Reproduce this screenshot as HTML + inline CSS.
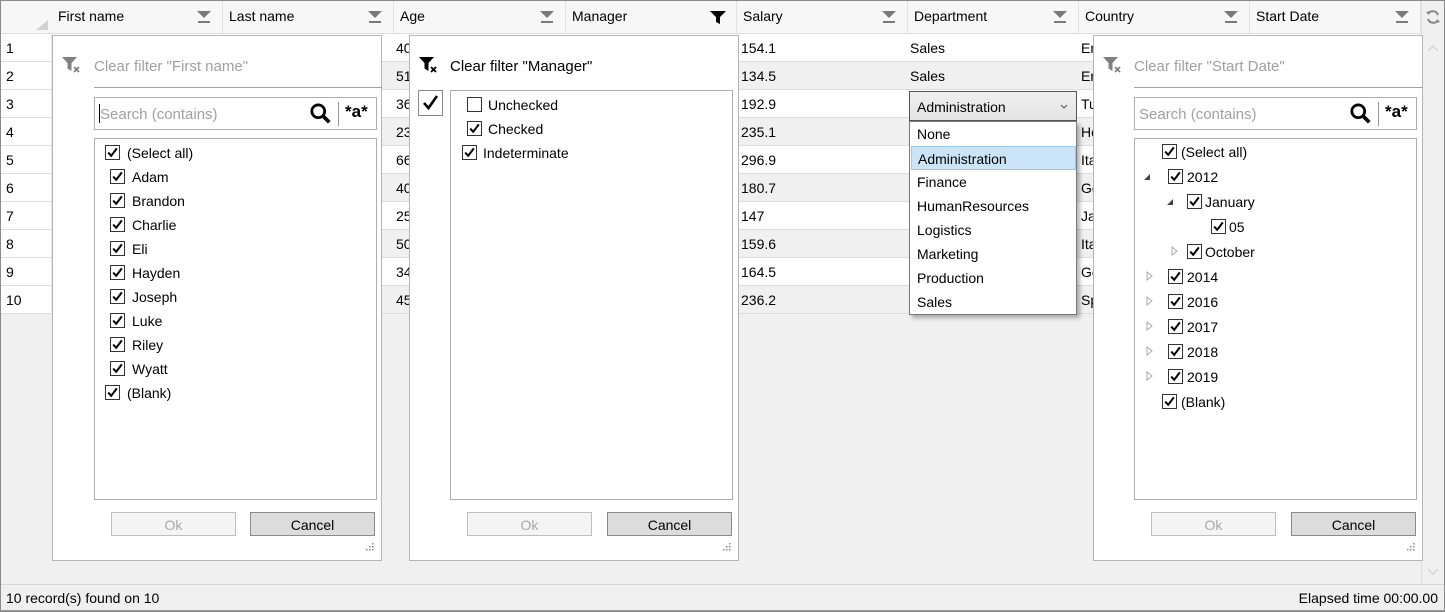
<!DOCTYPE html>
<html><head><meta charset="utf-8">
<style>
*{box-sizing:border-box;margin:0;padding:0}
body{width:1445px;height:612px;overflow:hidden;background:#f0f0f0;font-family:"Liberation Sans",sans-serif;font-size:14px;color:#000;position:relative}
.a{position:absolute}
.hdr{top:0;height:34px;background:#f7f7f7;border-bottom:1px solid #ddd}
.hc{position:absolute;top:0;height:34px;border-right:1px solid #e2e2e2;padding:8px 0 0 6px}
.ft{position:absolute;right:10px;top:10px}
.row{position:absolute;left:0;width:1421px;height:28px;border-bottom:1px solid #dcdcdc}
.rn{position:absolute;left:0;top:0;width:52px;height:27px;background:#fff;padding:6px 0 0 6px;border-right:1px solid #e6e6e6}
.c{position:absolute;top:6px}
.pop{position:absolute;top:35px;width:330px;height:526px;background:#fff;border:1px solid #b5b5b5}
.gt{color:#a0a0a0}
.box{position:absolute;border:1px solid #adadad;background:#fff}
.btn{position:absolute;width:125px;height:24px;text-align:center;padding-top:4px;border:1px solid #bfbfbf;background:#f4f4f4;color:#a8a8a8}
.btn.k{background:#dcdcdc;border-color:#8a8a8a;color:#000}
.cb{position:absolute;width:15px;height:15px}
.it{position:absolute}
.dd{position:absolute;left:1px;width:166px;padding-left:6px}
</style></head><body>
<svg width="0" height="0" style="position:absolute"><defs>
<symbol id="ck" viewBox="0 0 15 15"><rect x="0.5" y="0.5" width="14" height="14" fill="#fff" stroke="#333"/><path d="M3.2 7.6 L6.2 10.8 L11.8 3.4" fill="none" stroke="#000" stroke-width="2"/></symbol>
<symbol id="ft" viewBox="0 0 16 14"><path d="M1 1h14l-7 7z" fill="#7a7a7a"/><rect x="2" y="11" width="12" height="2" fill="#7a7a7a"/></symbol>
<symbol id="cf" viewBox="0 0 20 18"><path d="M0 1h15l-5.5 6v8l-4-2.5V7z" fill="currentColor"/><path d="M12 11l5 5M17 11l-5 5" stroke="currentColor" stroke-width="1.8"/></symbol>
<symbol id="mg" viewBox="0 0 24 24"><circle cx="9" cy="9" r="7" fill="none" stroke="#000" stroke-width="3"/><path d="M14 14l7 7" stroke="#000" stroke-width="4"/></symbol>
<symbol id="gr" viewBox="0 0 10 10"><g fill="#888"><rect x="7" y="1" width="1.5" height="1.5"/><rect x="4" y="4" width="1.5" height="1.5"/><rect x="7" y="4" width="1.5" height="1.5"/><rect x="1" y="7" width="1.5" height="1.5"/><rect x="4" y="7" width="1.5" height="1.5"/><rect x="7" y="7" width="1.5" height="1.5"/></g></symbol>
</defs></svg>

<div class="a hdr" style="left:0;width:1421px"></div>
<div class="a" style="left:36px;top:20px;width:0;height:0;border-left:12px solid transparent;border-bottom:10px solid #d0d0d0"></div>
<div class="hc" style="left:52px;width:171px">First name<svg class="ft" width="16" height="14"><use href="#ft"/></svg></div>
<div class="hc" style="left:223px;width:171px">Last name<svg class="ft" width="16" height="14"><use href="#ft"/></svg></div>
<div class="hc" style="left:394px;width:172px">Age<svg class="ft" width="16" height="14"><use href="#ft"/></svg></div>
<div class="hc" style="left:566px;width:171px">Manager<svg class="ft" width="16" height="14" viewBox="0 0 16 14"><path d="M0 1h16l-6 6v7l-4-2V7z" fill="#000"/></svg></div>
<div class="hc" style="left:737px;width:171px">Salary<svg class="ft" width="16" height="14"><use href="#ft"/></svg></div>
<div class="hc" style="left:908px;width:171px">Department<svg class="ft" width="16" height="14"><use href="#ft"/></svg></div>
<div class="hc" style="left:1079px;width:171px">Country<svg class="ft" width="16" height="14"><use href="#ft"/></svg></div>
<div class="hc" style="left:1250px;width:171px">Start Date<svg class="ft" width="16" height="14"><use href="#ft"/></svg></div>
<div class="a" style="left:1421px;top:0;width:24px;height:584px;background:#f0f0f0;border-left:1px solid #ddd"></div>
<svg class="a" style="left:1425px;top:9px" width="16" height="16" viewBox="0 0 16 16"><path d="M13 6A5.5 5.5 0 0 0 3 5M3 10a5.5 5.5 0 0 0 10 1" fill="none" stroke="#888" stroke-width="2"/><path d="M1 3l3 3 1-4z M15 13l-3-3-1 4z" fill="#888"/></svg>
<svg class="a" style="left:1427px;top:44px" width="12" height="8"><path d="M1 7l5-5 5 5" fill="none" stroke="#ccc"/></svg>
<svg class="a" style="left:1427px;top:568px" width="12" height="8"><path d="M1 1l5 5 5-5" fill="none" stroke="#ccc"/></svg>

<div class="row" style="top:34px;background:#fff"><span class="rn">1</span><span class="c" style="left:396px">40</span><span class="c" style="left:741px">154.1</span><span class="c" style="left:910px">Sales</span><span class="c" style="left:1081px">En</span></div>
<div class="row" style="top:62px;background:#f0f0f0"><span class="rn">2</span><span class="c" style="left:396px">51</span><span class="c" style="left:741px">134.5</span><span class="c" style="left:910px">Sales</span><span class="c" style="left:1081px">En</span></div>
<div class="row" style="top:90px;background:#fff"><span class="rn">3</span><span class="c" style="left:396px">36</span><span class="c" style="left:741px">192.9</span><span class="c" style="left:1081px">Tu</span></div>
<div class="row" style="top:118px;background:#f0f0f0"><span class="rn">4</span><span class="c" style="left:396px">23</span><span class="c" style="left:741px">235.1</span><span class="c" style="left:1081px">Ho</span></div>
<div class="row" style="top:146px;background:#fff"><span class="rn">5</span><span class="c" style="left:396px">66</span><span class="c" style="left:741px">296.9</span><span class="c" style="left:1081px">Ita</span></div>
<div class="row" style="top:174px;background:#f0f0f0"><span class="rn">6</span><span class="c" style="left:396px">40</span><span class="c" style="left:741px">180.7</span><span class="c" style="left:1081px">Ge</span></div>
<div class="row" style="top:202px;background:#fff"><span class="rn">7</span><span class="c" style="left:396px">25</span><span class="c" style="left:741px">147</span><span class="c" style="left:1081px">Ja</span></div>
<div class="row" style="top:230px;background:#f0f0f0"><span class="rn">8</span><span class="c" style="left:396px">50</span><span class="c" style="left:741px">159.6</span><span class="c" style="left:1081px">Ita</span></div>
<div class="row" style="top:258px;background:#fff"><span class="rn">9</span><span class="c" style="left:396px">34</span><span class="c" style="left:741px">164.5</span><span class="c" style="left:1081px">Ge</span></div>
<div class="row" style="top:286px;background:#f0f0f0"><span class="rn">10</span><span class="c" style="left:396px">45</span><span class="c" style="left:741px">236.2</span><span class="c" style="left:1081px">Sp</span></div>

<div class="pop" style="left:52px">
 <svg class="a" style="left:9px;top:20px;color:#808080" width="20" height="18"><use href="#cf"/></svg>
 <div class="a gt" style="left:41px;top:22px;font-size:15px">Clear filter "First name"</div>
 <div class="a" style="left:41px;top:51px;width:288px;height:1px;background:#a0a0a0"></div>
 <div class="box" style="left:41px;top:61px;width:283px;height:33px"><span class="a" style="left:4px;top:6px;width:1px;height:19px;background:#000"></span><span class="a gt" style="left:5px;top:8px;font-size:15px">Search (contains)</span>
 <svg class="a" style="left:215px;top:5px" width="22" height="22"><use href="#mg"/></svg><span class="a" style="left:243px;top:4px;width:1px;height:24px;background:#999"></span><span class="a" style="left:250px;top:4px;font-weight:bold;font-size:17px">*a*</span></div>
 <div class="box" style="left:41px;top:102px;width:283px;height:362px"></div>
 <svg class="cb" style="left:52px;top:109px"><use href="#ck"/></svg><span class="it" style="left:74px;top:109px">(Select all)</span>
 <svg class="cb" style="left:57px;top:133px"><use href="#ck"/></svg><span class="it" style="left:79px;top:133px">Adam</span>
 <svg class="cb" style="left:57px;top:157px"><use href="#ck"/></svg><span class="it" style="left:79px;top:157px">Brandon</span>
 <svg class="cb" style="left:57px;top:181px"><use href="#ck"/></svg><span class="it" style="left:79px;top:181px">Charlie</span>
 <svg class="cb" style="left:57px;top:205px"><use href="#ck"/></svg><span class="it" style="left:79px;top:205px">Eli</span>
 <svg class="cb" style="left:57px;top:229px"><use href="#ck"/></svg><span class="it" style="left:79px;top:229px">Hayden</span>
 <svg class="cb" style="left:57px;top:253px"><use href="#ck"/></svg><span class="it" style="left:79px;top:253px">Joseph</span>
 <svg class="cb" style="left:57px;top:277px"><use href="#ck"/></svg><span class="it" style="left:79px;top:277px">Luke</span>
 <svg class="cb" style="left:57px;top:301px"><use href="#ck"/></svg><span class="it" style="left:79px;top:301px">Riley</span>
 <svg class="cb" style="left:57px;top:325px"><use href="#ck"/></svg><span class="it" style="left:79px;top:325px">Wyatt</span>
 <svg class="cb" style="left:52px;top:349px"><use href="#ck"/></svg><span class="it" style="left:74px;top:349px">(Blank)</span>
 <div class="btn" style="left:58px;top:476px">Ok</div><div class="btn k" style="left:197px;top:476px">Cancel</div>
 <svg class="a" style="left:312px;top:506px" width="10" height="10"><use href="#gr"/></svg>
</div>

<div class="pop" style="left:409px">
 <svg class="a" style="left:9px;top:20px;color:#000" width="20" height="18"><use href="#cf"/></svg>
 <div class="a" style="left:40px;top:22px;font-size:15px">Clear filter "Manager"</div>
 <div class="a" style="left:8px;top:54px;width:25px;height:26px;border:1px solid #888;background:#fff"><svg width="23" height="24" viewBox="0 0 23 24"><path d="M5 12l4.5 5L18 5" fill="none" stroke="#000" stroke-width="2.6"/></svg></div>
 <div class="box" style="left:40px;top:54px;width:283px;height:410px"></div>
 <div class="cb" style="left:57px;top:61px;border:1px solid #333;background:#fff"></div><span class="it" style="left:78px;top:61px">Unchecked</span>
 <svg class="cb" style="left:57px;top:85px"><use href="#ck"/></svg><span class="it" style="left:78px;top:85px">Checked</span>
 <svg class="cb" style="left:52px;top:109px"><use href="#ck"/></svg><span class="it" style="left:73px;top:109px">Indeterminate</span>
 <div class="btn" style="left:57px;top:476px">Ok</div><div class="btn k" style="left:197px;top:476px">Cancel</div>
 <svg class="a" style="left:312px;top:506px" width="10" height="10"><use href="#gr"/></svg>
</div>

<div class="a" style="left:909px;top:91px;width:168px;height:30px;border:1px solid #555;background:linear-gradient(#f0f0f0,#e3e3e3);padding:7px 0 0 7px">Administration<svg class="a" style="left:150px;top:12px" width="8" height="6"><path d="M1 1l3 3 3-3" fill="none" stroke="#555"/></svg></div>
<div class="a" style="left:909px;top:121px;width:168px;height:194px;background:#fff;border:1px solid #7a7a7a;box-shadow:3px 3px 4px rgba(0,0,0,.3)">
 <div class="dd" style="top:4px">None</div>
 <div class="dd" style="top:24px;height:24px;padding-top:4px;background:#cce4f7;border:1px solid #99c9ef;width:165px">Administration</div>
 <div class="dd" style="top:52px">Finance</div>
 <div class="dd" style="top:76px">HumanResources</div>
 <div class="dd" style="top:100px">Logistics</div>
 <div class="dd" style="top:124px">Marketing</div>
 <div class="dd" style="top:148px">Production</div>
 <div class="dd" style="top:172px">Sales</div>
</div>

<div class="pop" style="left:1093px">
 <svg class="a" style="left:9px;top:20px;color:#808080" width="20" height="18"><use href="#cf"/></svg>
 <div class="a gt" style="left:40px;top:22px;font-size:15px">Clear filter "Start Date"</div>
 <div class="a" style="left:40px;top:51px;width:289px;height:1px;background:#a0a0a0"></div>
 <div class="box" style="left:40px;top:61px;width:283px;height:33px"><span class="a gt" style="left:4px;top:8px;font-size:15px">Search (contains)</span>
 <svg class="a" style="left:215px;top:5px" width="22" height="22"><use href="#mg"/></svg><span class="a" style="left:243px;top:4px;width:1px;height:24px;background:#999"></span><span class="a" style="left:250px;top:4px;font-weight:bold;font-size:17px">*a*</span></div>
 <div class="box" style="left:40px;top:102px;width:283px;height:362px"></div>
 <svg class="cb" style="left:68px;top:108px"><use href="#ck"/></svg><span class="it" style="left:87px;top:108px">(Select all)</span>
 <svg class="a" style="left:49px;top:137px" width="8" height="8"><path d="M7 1v6H1z" fill="#444"/></svg><svg class="cb" style="left:74px;top:133px"><use href="#ck"/></svg><span class="it" style="left:93px;top:133px">2012</span>
 <svg class="a" style="left:72px;top:162px" width="8" height="8"><path d="M7 1v6H1z" fill="#444"/></svg><svg class="cb" style="left:93px;top:158px"><use href="#ck"/></svg><span class="it" style="left:111px;top:158px">January</span>
 <svg class="cb" style="left:117px;top:183px"><use href="#ck"/></svg><span class="it" style="left:135px;top:183px">05</span>
 <svg class="a" style="left:77px;top:210px" width="8" height="10"><path d="M1 1l5 4-5 4z" fill="none" stroke="#aaa"/></svg><svg class="cb" style="left:93px;top:208px"><use href="#ck"/></svg><span class="it" style="left:111px;top:208px">October</span>
 <svg class="a" style="left:52px;top:235px" width="8" height="10"><path d="M1 1l5 4-5 4z" fill="none" stroke="#aaa"/></svg><svg class="cb" style="left:74px;top:233px"><use href="#ck"/></svg><span class="it" style="left:93px;top:233px">2014</span>
 <svg class="a" style="left:52px;top:260px" width="8" height="10"><path d="M1 1l5 4-5 4z" fill="none" stroke="#aaa"/></svg><svg class="cb" style="left:74px;top:258px"><use href="#ck"/></svg><span class="it" style="left:93px;top:258px">2016</span>
 <svg class="a" style="left:52px;top:285px" width="8" height="10"><path d="M1 1l5 4-5 4z" fill="none" stroke="#aaa"/></svg><svg class="cb" style="left:74px;top:283px"><use href="#ck"/></svg><span class="it" style="left:93px;top:283px">2017</span>
 <svg class="a" style="left:52px;top:310px" width="8" height="10"><path d="M1 1l5 4-5 4z" fill="none" stroke="#aaa"/></svg><svg class="cb" style="left:74px;top:308px"><use href="#ck"/></svg><span class="it" style="left:93px;top:308px">2018</span>
 <svg class="a" style="left:52px;top:335px" width="8" height="10"><path d="M1 1l5 4-5 4z" fill="none" stroke="#aaa"/></svg><svg class="cb" style="left:74px;top:333px"><use href="#ck"/></svg><span class="it" style="left:93px;top:333px">2019</span>
 <svg class="cb" style="left:68px;top:358px"><use href="#ck"/></svg><span class="it" style="left:87px;top:358px">(Blank)</span>
 <div class="btn" style="left:57px;top:476px">Ok</div><div class="btn k" style="left:197px;top:476px">Cancel</div>
 <svg class="a" style="left:312px;top:506px" width="10" height="10"><use href="#gr"/></svg>
</div>

<div class="a" style="left:0;top:584px;width:1445px;height:28px;background:#f0f0f0;border-top:1px solid #d8d8d8;border-bottom:2px solid #999"></div>
<div class="a" style="left:6px;top:590px">10 record(s) found on 10</div>
<div class="a" style="right:7px;top:590px">Elapsed time 00:00.00</div>
<div class="a" style="left:0;top:0;width:1445px;height:612px;border:1px solid #8a8a8a;pointer-events:none"></div>
</body></html>
